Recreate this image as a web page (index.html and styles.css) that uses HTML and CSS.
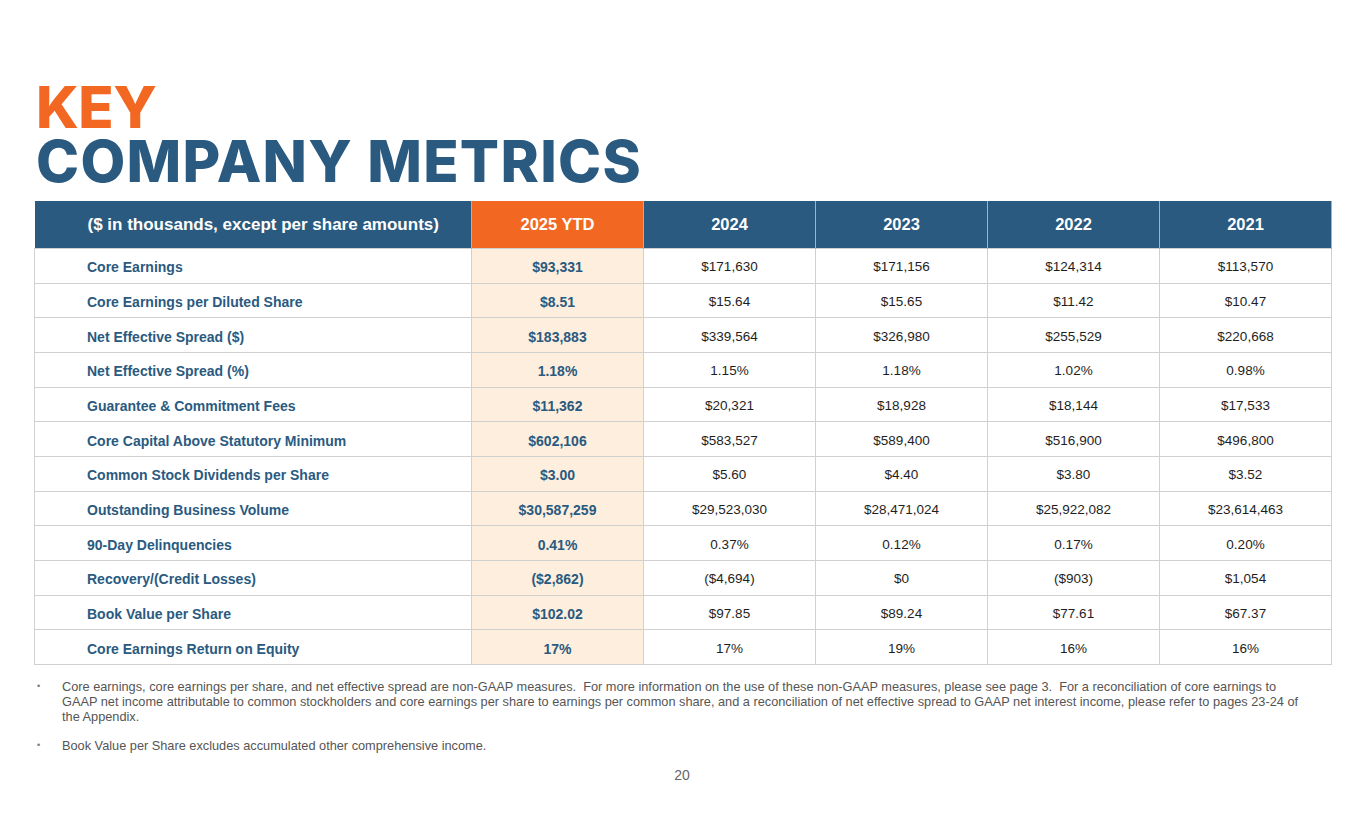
FILE: index.html
```html
<!DOCTYPE html>
<html>
<head>
<meta charset="utf-8">
<link rel="stylesheet" href="styles.css">
</head>
<body>
<div class="page">
  <h1 class="title"><span class="key">KEY</span><span class="main">COMPANY METRICS</span></h1>
  <table class="metrics">
    <colgroup>
      <col class="c-label"><col class="c-num"><col class="c-num"><col class="c-num"><col class="c-num"><col class="c-num">
    </colgroup>
    <thead>
      <tr>
        <th class="h-label">($ in thousands, except per share amounts)</th>
        <th class="h-ytd">2025 YTD</th>
        <th>2024</th>
        <th>2023</th>
        <th>2022</th>
        <th>2021</th>
      </tr>
    </thead>
    <tbody>
      <tr><td class="label">Core Earnings</td><td class="ytd">$93,331</td><td>$171,630</td><td>$171,156</td><td>$124,314</td><td>$113,570</td></tr>
      <tr><td class="label">Core Earnings per Diluted Share</td><td class="ytd">$8.51</td><td>$15.64</td><td>$15.65</td><td>$11.42</td><td>$10.47</td></tr>
      <tr><td class="label">Net Effective Spread ($)</td><td class="ytd">$183,883</td><td>$339,564</td><td>$326,980</td><td>$255,529</td><td>$220,668</td></tr>
      <tr><td class="label">Net Effective Spread (%)</td><td class="ytd">1.18%</td><td>1.15%</td><td>1.18%</td><td>1.02%</td><td>0.98%</td></tr>
      <tr><td class="label">Guarantee &amp; Commitment Fees</td><td class="ytd">$11,362</td><td>$20,321</td><td>$18,928</td><td>$18,144</td><td>$17,533</td></tr>
      <tr><td class="label">Core Capital Above Statutory Minimum</td><td class="ytd">$602,106</td><td>$583,527</td><td>$589,400</td><td>$516,900</td><td>$496,800</td></tr>
      <tr><td class="label">Common Stock Dividends per Share</td><td class="ytd">$3.00</td><td>$5.60</td><td>$4.40</td><td>$3.80</td><td>$3.52</td></tr>
      <tr><td class="label">Outstanding Business Volume</td><td class="ytd">$30,587,259</td><td>$29,523,030</td><td>$28,471,024</td><td>$25,922,082</td><td>$23,614,463</td></tr>
      <tr><td class="label">90-Day Delinquencies</td><td class="ytd">0.41%</td><td>0.37%</td><td>0.12%</td><td>0.17%</td><td>0.20%</td></tr>
      <tr><td class="label">Recovery/(Credit Losses)</td><td class="ytd">($2,862)</td><td>($4,694)</td><td>$0</td><td>($903)</td><td>$1,054</td></tr>
      <tr><td class="label">Book Value per Share</td><td class="ytd">$102.02</td><td>$97.85</td><td>$89.24</td><td>$77.61</td><td>$67.37</td></tr>
      <tr><td class="label">Core Earnings Return on Equity</td><td class="ytd">17%</td><td>17%</td><td>19%</td><td>16%</td><td>16%</td></tr>
    </tbody>
  </table>
  <ul class="notes">
    <li>Core earnings, core earnings per share, and net effective spread are non-GAAP measures.&nbsp; For more information on the use of these non-GAAP measures, please see page 3.&nbsp; For a reconciliation of core earnings to<br>GAAP net income attributable to common stockholders and core earnings per share to earnings per common share, and a reconciliation of net effective spread to GAAP net interest income, please refer to pages 23-24 of<br>the Appendix.</li>
    <li>Book Value per Share excludes accumulated other comprehensive income.</li>
  </ul>
  <div class="pagenum">20</div>
</div>
</body>
</html>
```

FILE: styles.css
```css
html, body {
  margin: 0;
  padding: 0;
  background: #ffffff;
}
.page {
  width: 1365px;
  height: 829px;
  box-sizing: border-box;
  padding: 80px 34px 0 34px;
  font-family: "Liberation Sans", Arial, sans-serif;
}
.title {
  margin: 0 0 13px 2px;
  font-family: Inter, "Liberation Sans", sans-serif;
  font-weight: 800;
  font-size: 58px;
  line-height: 54px;
}
.title span {
  display: block;
}
.key {
  color: #f26822;
  letter-spacing: -0.5px;
}
.main {
  color: #2a5a80;
  letter-spacing: 1.3px;
}
.metrics {
  border-collapse: collapse;
  table-layout: fixed;
  width: 1297px;
}
.c-label { width: 437px; }
.c-num { width: 172px; }
.metrics th {
  height: 47px;
  padding: 0;
  background: #2a5a80;
  color: #ffffff;
  font-size: 16.5px;
  font-weight: bold;
  text-align: center;
  border-left: 1px solid #9fb3c6;
  border-right: 1px solid #9fb3c6;
}
.metrics th.h-label {
  text-align: left;
  padding-left: 53px;
  font-size: 17px;
  border-left: none;
}
.metrics th.h-ytd {
  background: #f26822;
}
.metrics tbody tr {
  height: 34.67px;
}
.metrics td {
  padding: 3px 0 0 0;
  border: 1px solid #d0d0d0;
  text-align: center;
  font-size: 13.5px;
  line-height: 16px;
  color: #1e1e1e;
}
.metrics td.label {
  text-align: left;
  padding-left: 52px;
  font-weight: bold;
  font-size: 14px;
  color: #2a5a80;
}
.metrics td.ytd {
  background: #fdeedd;
  font-weight: bold;
  font-size: 14px;
  color: #2a5a80;
}
.notes {
  margin: 14px 0 0 0;
  padding: 0 0 0 28px;
  list-style: none;
  font-size: 12.75px;
  line-height: 15px;
  color: #555555;
}
.notes li {
  position: relative;
  margin-bottom: 14px;
}
.notes li::before {
  content: "\2022";
  position: absolute;
  left: -25px;
  top: 0;
  font-size: 9px;
  color: #777777;
}
.pagenum {
  margin-top: 0;
  text-align: center;
  font-size: 14px;
  color: #666666;
  padding-right: 1px;
}
```
